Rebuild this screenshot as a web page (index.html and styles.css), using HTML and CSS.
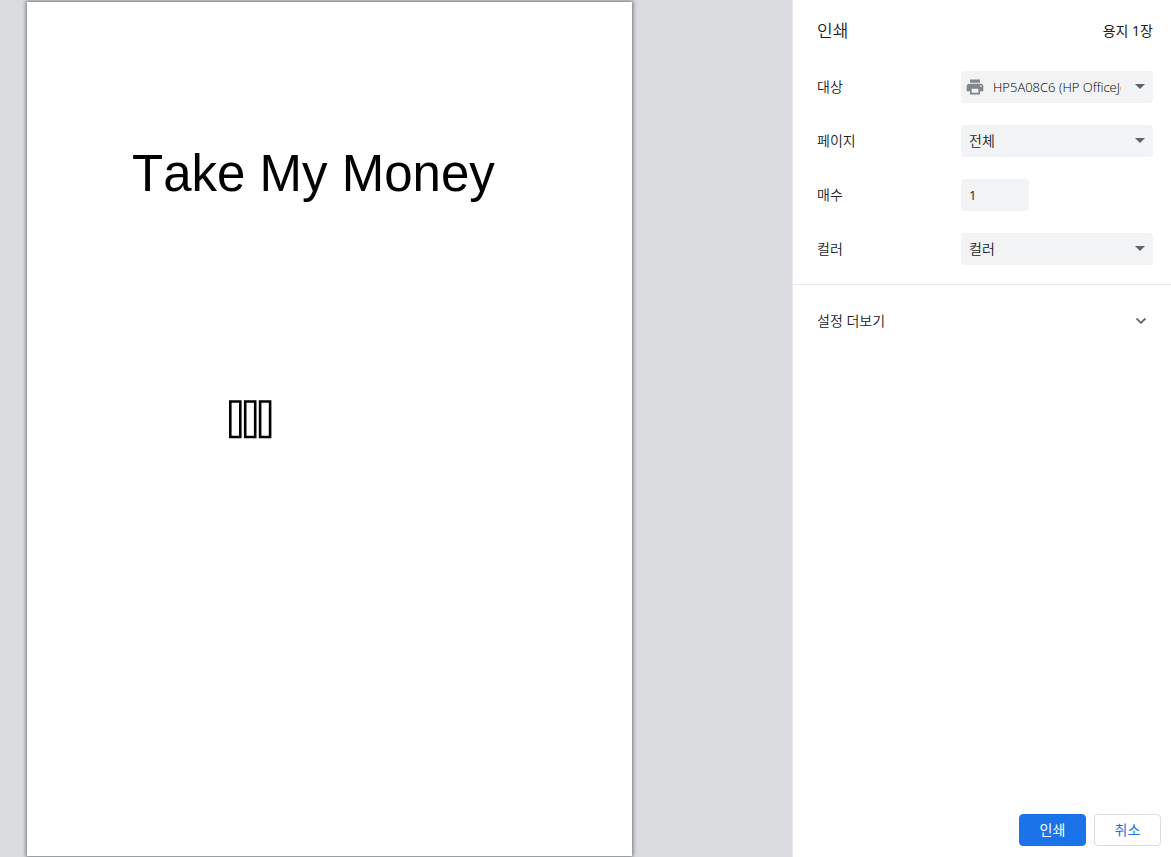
FILE: index.html
```html
<!DOCTYPE html>
<html lang="ko">
<head>
<meta charset="utf-8">
<title>인쇄</title>
<link rel="stylesheet" href="styles.css">
</head>
<body>
<div class="dialog">
  <main class="preview">
    <article class="paper">
      <h1 class="paper-title">Take My Money</h1>
      <svg class="boxes" viewBox="0 0 43 39" width="43" height="39" fill="none" stroke="#000" stroke-width="2.6" aria-hidden="true">
        <path d="M1.300 1.500h10v35.500h-10zM16.200 1.500h10v35.500h-10zM31.100 1.500h10v35.500h-10z"/>
      </svg>
    </article>
  </main>
  <form class="sidebar">
    <header class="header">
      <h2 class="heading">인쇄</h2>
      <span class="sheets">용지 1장</span>
    </header>
    <div class="settings">
      <div class="row">
        <label for="destination">대상</label>
        <div class="field">
          <select id="destination" class="control destination"><option>HP5A08C6 (HP OfficeJet Pro 8710)</option></select>
          <svg class="printer" viewBox="0 0 24 24" width="20" height="20" fill="#80868b" aria-hidden="true"><path d="M19 8H5c-1.660 0-3 1.340-3 3v6h4v4h12v-4h4v-6c0-1.660-1.340-3-3-3zm-3 11H8v-5h8v5zm3-7c-.55 0-1-.45-1-1s.45-1 1-1 1 .45 1 1-.45 1-1 1zm-1-9H6v4h12V3z"/></svg>
          <svg class="arrow" viewBox="0 0 10 5" width="10" height="5" fill="#5f6368" aria-hidden="true"><path d="M0 0h10L5 5z"/></svg>
        </div>
      </div>
      <div class="row">
        <label for="pages">페이지</label>
        <div class="field">
          <select id="pages" class="control"><option>전체</option></select>
          <svg class="arrow" viewBox="0 0 10 5" width="10" height="5" fill="#5f6368" aria-hidden="true"><path d="M0 0h10L5 5z"/></svg>
        </div>
      </div>
      <div class="row">
        <label for="copies">매수</label>
        <div class="field"><input id="copies" class="control copies" type="text" inputmode="numeric" value="1"></div>
      </div>
      <div class="row">
        <label for="color">컬러</label>
        <div class="field">
          <select id="color" class="control"><option>컬러</option></select>
          <svg class="arrow" viewBox="0 0 10 5" width="10" height="5" fill="#5f6368" aria-hidden="true"><path d="M0 0h10L5 5z"/></svg>
        </div>
      </div>
    </div>
    <button type="button" class="more">
      <span>설정 더보기</span>
      <svg viewBox="0 0 10 6" width="10" height="6" fill="none" stroke="#5f6368" stroke-width="1.8" aria-hidden="true"><path d="M.6.5 5 4.800 9.400.5"/></svg>
    </button>
    <footer class="actions">
      <button type="button" class="button primary">인쇄</button>
      <button type="button" class="button">취소</button>
    </footer>
  </form>
</div>
</body>
</html>
```
FILE: styles.css
```css
* { box-sizing: border-box; }

body {
  margin: 0;
  font: 350 13px/20px "Noto Sans", "Noto Sans CJK KR", sans-serif;
  color: #202124;
}

.dialog {
  display: grid;
  grid-template-columns: 1fr 379px;
  height: 100vh;
}

.preview {
  overflow: hidden;
  padding: 2px 0 1px 27px;
  background: #dadce0;
}

.paper {
  height: 100%;
  aspect-ratio: 605 / 854;
  padding: 142px 105px 0;
  background: #fff;
  box-shadow: 0 0 4px 1px #70737a;
}

.paper-title {
  margin: 0;
  font: 51px/60px "Liberation Sans", Arial, sans-serif;
  font-kerning: none;
  color: #000;
  white-space: nowrap;
}

.boxes {
  display: block;
  margin: 196px 0 0 97px;
}

.sidebar {
  display: flex;
  flex-direction: column;
  border-left: 1px solid #e8eaed;
  background: #fff;
}

.header {
  display: flex;
  align-items: center;
  justify-content: space-between;
  padding: 20px 18px 20px 24px;
}

.heading {
  margin: 0;
  font-size: 17px;
  font-weight: inherit;
  line-height: 22px;
}

.sheets,
.row label,
.more,
.button { font-size: 14px; }

.sheets { font-weight: 400; }

.settings {
  display: grid;
  gap: 22px;
  padding: 9px 18px 19px 24px;
  border-bottom: 1px solid #e8eaed;
}

.row {
  display: flex;
  align-items: center;
  justify-content: space-between;
}

.field {
  position: relative;
  width: 192px;
}

.control {
  display: block;
  width: 100%;
  height: 32px;
  padding: 0 32px 0 8px;
  border: 0;
  border-radius: 4px;
  background: #f1f3f4;
  color: #202124;
  font: inherit;
  font-size: 14px;
  appearance: none;
}

.destination {
  padding-left: 32px;
  color: #000;
  font: 350 13px "Open Sans", sans-serif;
  text-overflow: clip;
}

.copies {
  width: 68px;
  padding-right: 8px;
  font: 400 13px "Open Sans", sans-serif;
}

.printer {
  position: absolute;
  top: 6px;
  left: 4px;
  pointer-events: none;
}

.arrow {
  position: absolute;
  top: 13px;
  right: 8px;
  pointer-events: none;
}

.more {
  display: flex;
  align-items: center;
  justify-content: space-between;
  padding: 26px 25px 26px 24px;
  border: 0;
  background: none;
  color: inherit;
  font-family: inherit;
  font-weight: inherit;
  line-height: 20px;
}

.actions {
  display: flex;
  justify-content: flex-end;
  gap: 8px;
  margin-top: auto;
  padding: 11px 10px;
}

.button {
  min-width: 67px;
  height: 32px;
  padding: 0 8px;
  border: 1px solid #dadce0;
  border-radius: 4px;
  background: #fff;
  color: #1a73e8;
  font-family: inherit;
  line-height: 20px;
}

.primary {
  border-color: #1a73e8;
  background: #1a73e8;
  color: #fff;
}
```
